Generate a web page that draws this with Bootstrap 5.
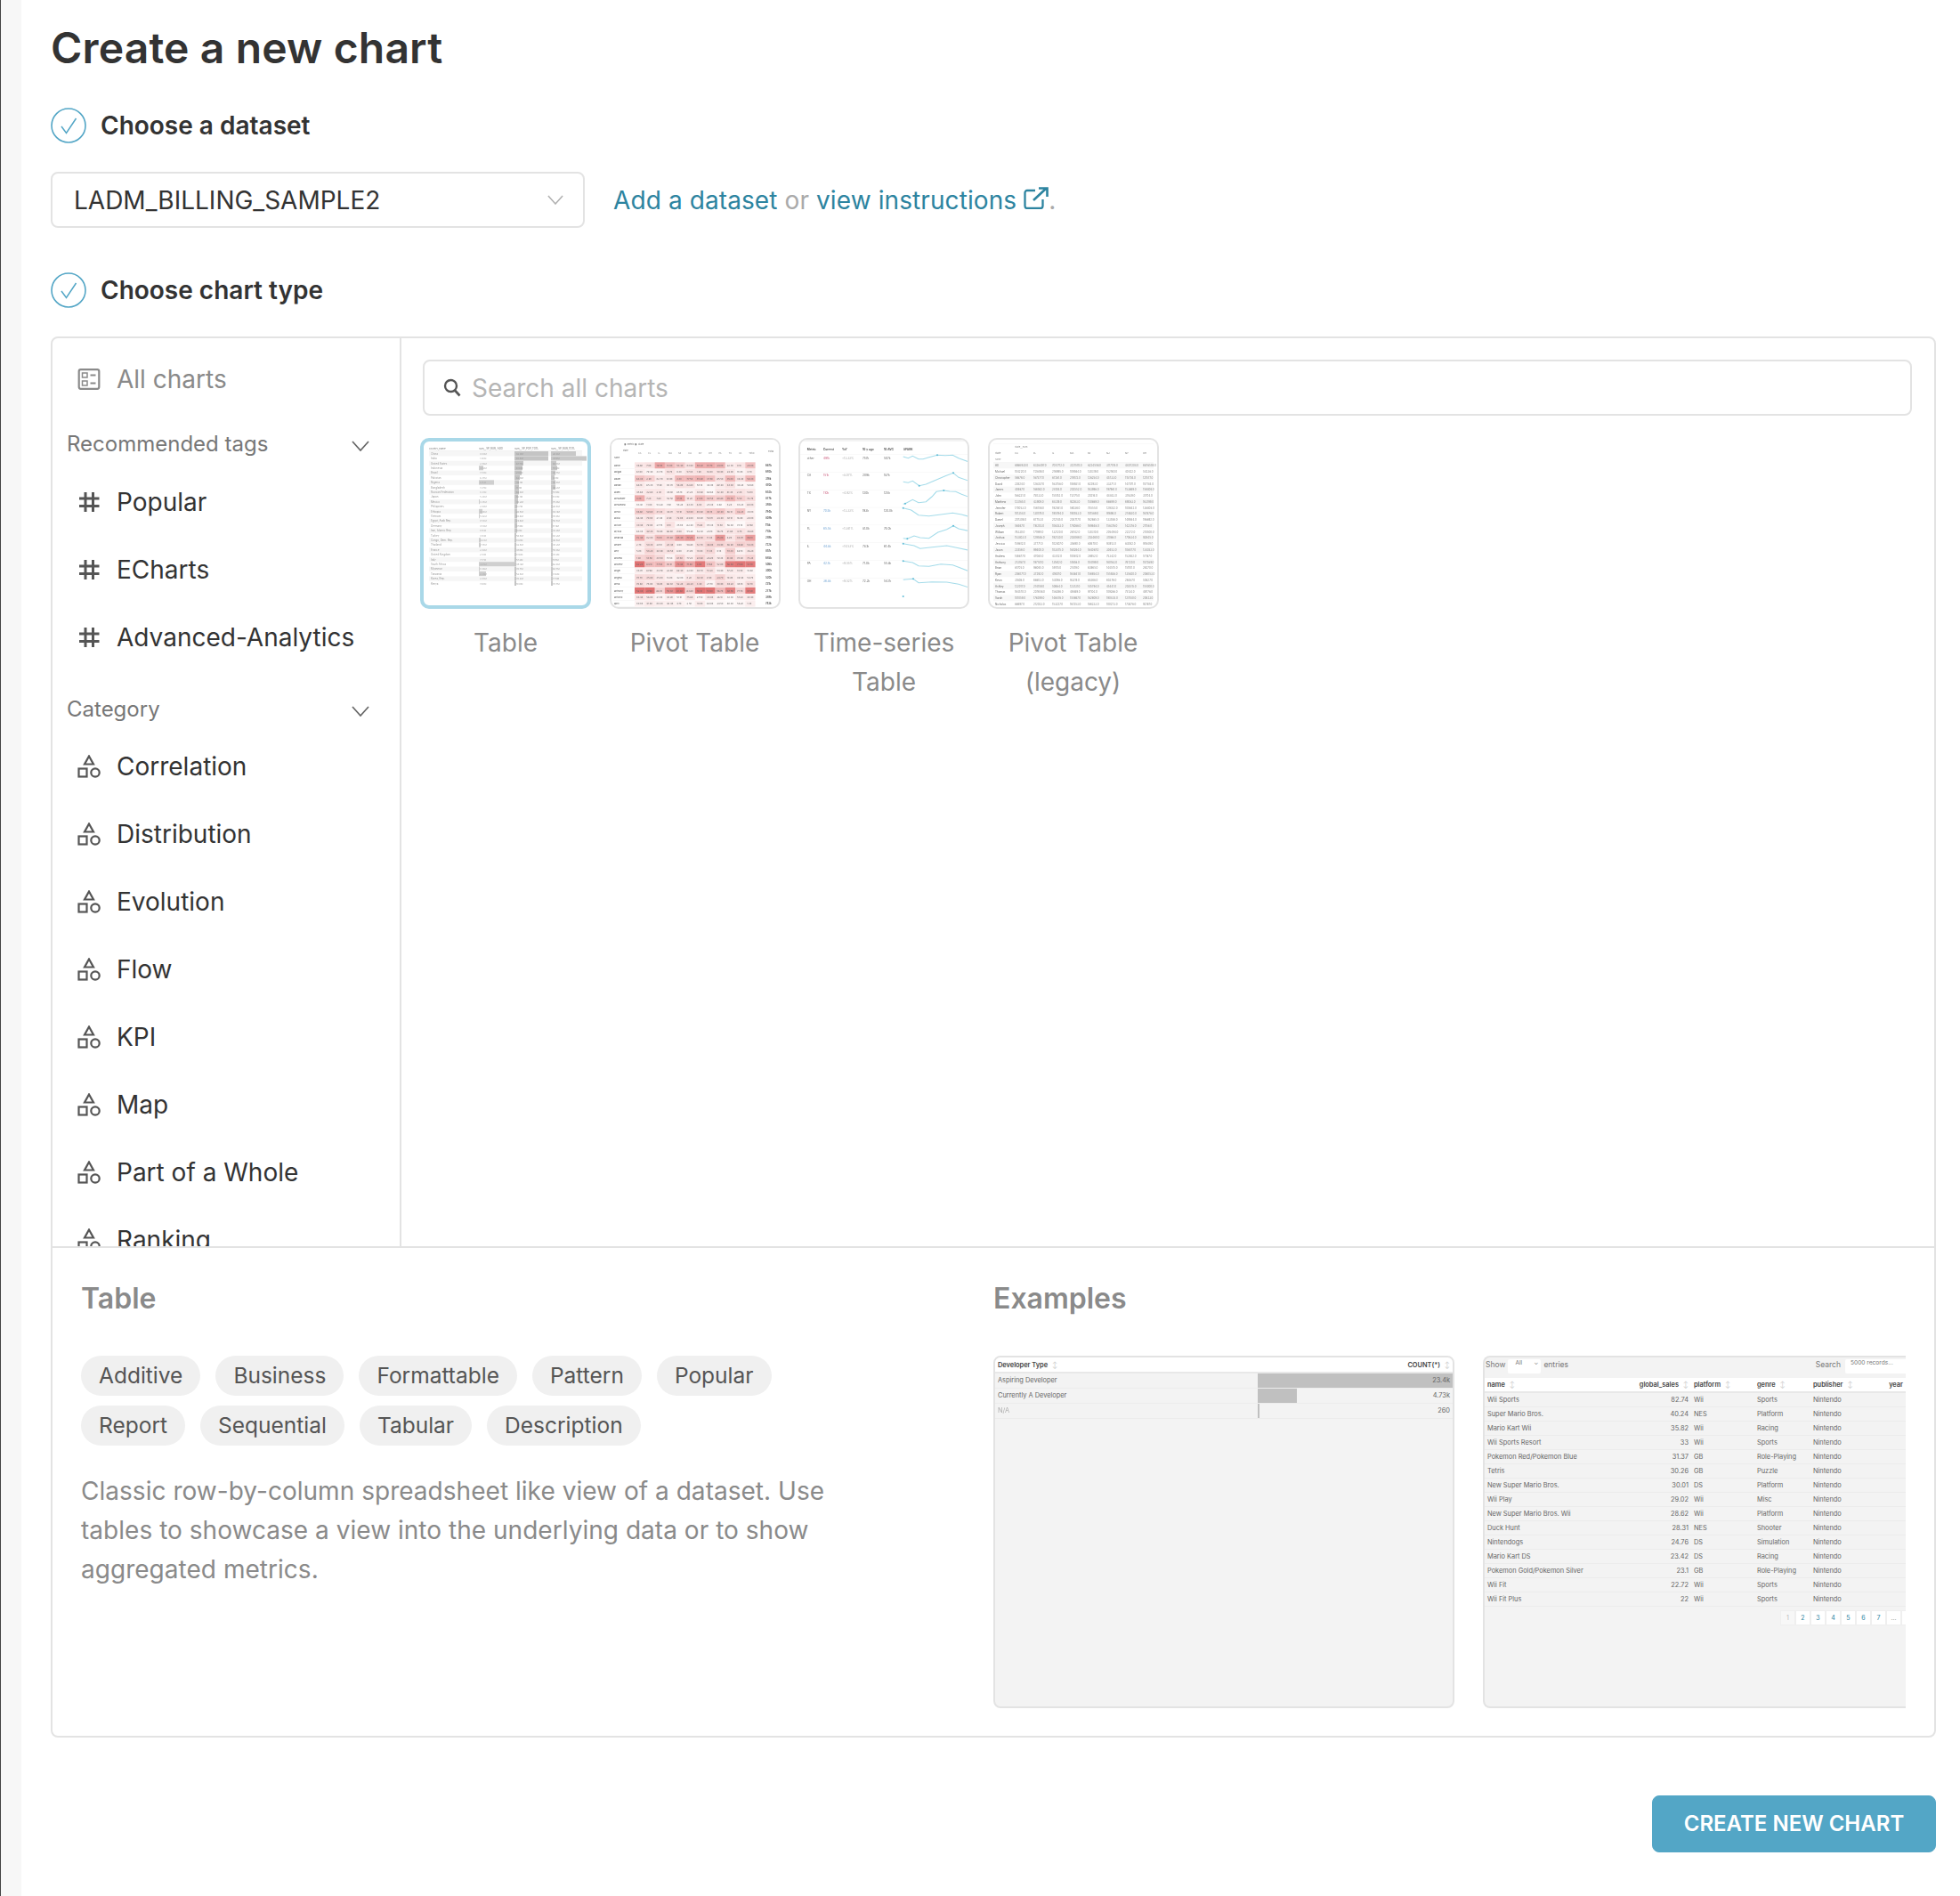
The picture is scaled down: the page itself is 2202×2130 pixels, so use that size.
<!DOCTYPE html>
<html lang="en">
<head>
<meta charset="utf-8">
<title>Create a new chart</title>
<link href="https://cdn.jsdelivr.net/npm/bootstrap@5.3.0/dist/css/bootstrap.min.css" rel="stylesheet">
<style>
html,body{height:100%}
body{font-family:Inter,"Liberation Sans",sans-serif;color:#333;background:#fff;overflow:hidden}
.shell{height:2130px}
.strip{width:24px;flex:none;background:#f7f7f7;border-left:1px solid #444}
.work{flex:1;min-width:0;padding:0 27px 0 33px}
.ttl{font-size:48px;font-weight:600;line-height:60px;margin:24px 0 0;color:#333;letter-spacing:.15px}
.step{height:40px;font-size:28px;font-weight:600;gap:16px;color:#333}
.step1{margin-top:37px}.step2{margin-top:50px}
.setrow{margin-top:32px;height:63px;font-size:28px;color:#aaa;gap:32px;letter-spacing:.1px}
.dsel{width:600px;height:63px;border:2px solid #e3e3e3;border-radius:8px;padding:0 22px 0 24px;color:#333;font-size:28px;letter-spacing:0}
.lnk{color:#2d84a0;text-decoration:none}
.pane{margin-top:32px;height:1574px;border:2px solid #e3e3e3;border-radius:8px;overflow:hidden}
.toparea{height:1022px;border-bottom:2px solid #e3e3e3}
.side{width:392px;flex:none;border-right:2px solid #e3e3e3;overflow:hidden;padding-top:8px}
.itm{height:76px;font-size:28px;color:#333;padding-left:28px}
.itm svg{flex:none}
.itm .tx{margin-left:18px}
.itm.mute{color:#8a8a8a}
.grp{height:40px;margin-top:15px;margin-bottom:7px;padding:0 34px 0 16px;font-size:24px;color:#777}
.grp svg{margin-top:4px}
.grp2{margin-top:23px;margin-bottom:6px}
.mainp{flex:1;min-width:0;padding:24px 25px 0 21px}
.srch{margin-left:3px;height:63px;border:2px solid #e3e3e3;border-radius:8px;padding:0 14px 0 21px;gap:10px}
.srch input{border:0;outline:0;flex:1;font:400 28px Inter,sans-serif;color:#333;background:none}
.srch input::placeholder{color:#b5b5b5;opacity:1}
.thumbs{margin-top:25px;gap:20.5px}
.tcell{width:192px;text-align:center;font-size:28px;line-height:44px;color:#8a8a8a}
.tbox{display:block;width:192px;height:192px;border:2px solid #e3e3e3;border-radius:10px;overflow:hidden;margin-bottom:16px;background:#fff}
.tbox.sel{border:4px solid #a9d8e8}
.tbox svg{display:block;width:100%;height:100%;filter:blur(.4px);font-family:Inter,sans-serif}
.infoL{width:1057px;padding:35px 0 0 32px}
.infoR{flex:1;min-width:0;padding-top:35px}
.hd{font-size:32px;font-weight:600;line-height:44px;color:#8a8a8a;margin:0}
.tags{margin-top:42px;gap:11px 17px;width:860px}
.tagp{height:45px;padding:0 20px;border-radius:23px;background:#f0f0f0;color:#555;font-size:24.5px;line-height:45px}
.dsc{margin:29px 0 0;width:860px;font-size:28px;line-height:44px;color:#8a8a8a;letter-spacing:.03px}
.exs{margin-top:42px;gap:32px}
.ex{height:396px;background:#f3f3f3;border:2px solid #e3e3e3;border-radius:8px;overflow:hidden;font-size:7.4px;color:#666}
.ex1{width:518px}
.ex2{width:475px;border-right:0;border-radius:8px 0 0 8px}
.ex .table{--bs-table-bg:transparent;--bs-table-color:#666;margin:0;table-layout:fixed;font-size:7.4px;--bs-table-border-color:#ececec}
.ex .table th,.ex .table td{padding:0 3px;height:16px;line-height:15px;white-space:nowrap;overflow:hidden;vertical-align:middle}
.ex .table th{background:#fff;color:#444;font-weight:600;border-bottom:2px solid #e8e8e8}
.ex1 .table th{height:17px}.ex1 .table td{height:17px}
.srt{color:#ccc;font-weight:400;margin-left:3px}
.tb{height:23px;padding:2px 0 0 1px;gap:3px;font-size:8.5px;color:#777}
.tsel{width:37px;height:16px;background:#fff;border-radius:2px;font-size:6.6px;padding:0 3px 0 8px}
.tinp{width:68px;height:16px;background:#fff;border-radius:2px 0 0 2px;font-size:6.6px;padding-left:6px;margin-left:2px}
.pg{margin:4px 0 0 332px;height:17px;width:200px;font-size:7px}
.pg span{width:17px;height:17px;background:#fff;color:#2d84a0;border:1px solid #efefef;text-align:center;line-height:15px;flex:none}
.pg span.off{color:#bbb;background:#f7f7f7}
.pg span.dots{color:#999}
.foot{margin-top:65px}
.cta{width:319px;height:64px;background:#53a6c6;border-color:#53a6c6;color:#fff;font-size:24px;font-weight:600;border-radius:8px;padding:0}
.cta:hover{background:#4897b6;border-color:#4897b6;color:#fff}
</style>
</head>
<body>
<svg width="0" height="0" class="d-block position-absolute">
  <symbol id="i-check" viewBox="0 0 40 40"><circle cx="20" cy="20" r="19" fill="none" stroke="#53a6c6" stroke-width="1.6"/><path d="M12 21l5.500 7.500L28.500 12" fill="none" stroke="#53a6c6" stroke-width="1.500"/></symbol>
  <symbol id="i-hash" viewBox="0 0 26 26"><path d="M9 2V24M17.500 2V24M2 9H24.500M2 17.500H24.500" fill="none" stroke="#555" stroke-width="3"/></symbol>
  <symbol id="i-shape" viewBox="0 0 26 26"><path d="M13 1.500L18 10.500H8Z" fill="none" stroke="#555" stroke-width="2.200"/><rect x="1.500" y="15.500" width="9" height="9" fill="none" stroke="#555" stroke-width="2.200"/><circle cx="20" cy="20" r="4.700" fill="none" stroke="#555" stroke-width="2.200"/></symbol>
  <symbol id="i-chev" viewBox="0 0 20 12"><path d="M1 1l9 10 9-10" fill="none" stroke="#666" stroke-width="1.700"/></symbol>
</svg>
<div class="shell d-flex">
  <div class="strip"></div>
  <main class="work">
    <h1 class="ttl">Create a new chart</h1>
    <div class="step step1 d-flex align-items-center"><svg width="40" height="40"><use href="#i-check"/></svg><span>Choose a dataset</span></div>
    <div class="setrow d-flex align-items-center">
      <div class="dsel d-flex align-items-center justify-content-between"><span>LADM_BILLING_SAMPLE2</span><svg width="18" height="11" viewBox="0 0 20 12"><path d="M1 1l9 10 9-10" fill="none" stroke="#b0b0b0" stroke-width="1.700"/></svg></div>
      <div><a class="lnk" href="#">Add a dataset</a> or <a class="lnk" href="#">view instructions <svg width="28" height="25" viewBox="0 0 28 25" class="align-baseline"><path d="M13 4H4a2.500 2.500 0 0 0-2.500 2.500v15A2.500 2.500 0 0 0 4 24h15a2.500 2.500 0 0 0 2.500-2.500V14" fill="none" stroke="#2d84a0" stroke-width="2.300"/><path d="M11 15L25 2M17 1.500h9.500V11" fill="none" stroke="#2d84a0" stroke-width="2.600"/></svg></a>.</div>
    </div>
    <div class="step step2 d-flex align-items-center"><svg width="40" height="40"><use href="#i-check"/></svg><span>Choose chart type</span></div>

    <section class="pane">
      <div class="toparea d-flex">
        <aside class="side">
          <div class="itm mute d-flex align-items-center"><svg width="26" height="24" viewBox="0 0 25 24"><rect x="1.200" y="1.200" width="22.600" height="21.600" rx="2" fill="none" stroke="#8a8a8a" stroke-width="2.200"/><rect x="5" y="5" width="5.500" height="5" fill="none" stroke="#8a8a8a" stroke-width="1.500"/><rect x="5" y="14" width="5.500" height="5" fill="none" stroke="#8a8a8a" stroke-width="1.500"/><path d="M14 7.500h6M14 16.500h6" stroke="#8a8a8a" stroke-width="2"/></svg><span class="tx">All charts</span></div>
          <div class="grp d-flex align-items-center justify-content-between"><span>Recommended tags</span><svg width="20" height="12"><use href="#i-chev"/></svg></div>
          <div class="itm d-flex align-items-center"><svg width="26" height="26"><use href="#i-hash"/></svg><span class="tx">Popular</span></div>
          <div class="itm d-flex align-items-center"><svg width="26" height="26"><use href="#i-hash"/></svg><span class="tx">ECharts</span></div>
          <div class="itm d-flex align-items-center"><svg width="26" height="26"><use href="#i-hash"/></svg><span class="tx">Advanced-Analytics</span></div>
          <div class="grp grp2 d-flex align-items-center justify-content-between"><span>Category</span><svg width="20" height="12"><use href="#i-chev"/></svg></div>
          <div class="itm d-flex align-items-center"><svg width="26" height="26"><use href="#i-shape"/></svg><span class="tx">Correlation</span></div>
          <div class="itm d-flex align-items-center"><svg width="26" height="26"><use href="#i-shape"/></svg><span class="tx">Distribution</span></div>
          <div class="itm d-flex align-items-center"><svg width="26" height="26"><use href="#i-shape"/></svg><span class="tx">Evolution</span></div>
          <div class="itm d-flex align-items-center"><svg width="26" height="26"><use href="#i-shape"/></svg><span class="tx">Flow</span></div>
          <div class="itm d-flex align-items-center"><svg width="26" height="26"><use href="#i-shape"/></svg><span class="tx">KPI</span></div>
          <div class="itm d-flex align-items-center"><svg width="26" height="26"><use href="#i-shape"/></svg><span class="tx">Map</span></div>
          <div class="itm d-flex align-items-center"><svg width="26" height="26"><use href="#i-shape"/></svg><span class="tx">Part of a Whole</span></div>
          <div class="itm d-flex align-items-center"><svg width="26" height="26"><use href="#i-shape"/></svg><span class="tx">Ranking</span></div>
        </aside>
        <div class="mainp">
          <label class="srch d-flex align-items-center"><svg width="20" height="21" viewBox="0 0 20 21"><circle cx="8.500" cy="8.500" r="6.500" fill="none" stroke="#555" stroke-width="2.400"/><path d="M13 13.500l5.500 6" stroke="#555" stroke-width="2.600"/></svg><input type="text" placeholder="Search all charts" aria-label="Search all charts"></label>
          <div class="thumbs d-flex">
            <div class="tcell"><span class="tbox sel"><svg id="t1" viewBox="0 0 184 184"></svg></span>Table</div>
            <div class="tcell"><span class="tbox"><svg id="t2" viewBox="0 0 188 188"></svg></span>Pivot Table</div>
            <div class="tcell"><span class="tbox"><svg id="t3" viewBox="0 0 188 188"></svg></span>Time-series Table</div>
            <div class="tcell"><span class="tbox"><svg id="t4" viewBox="0 0 188 188"></svg></span>Pivot Table (legacy)</div>
          </div>
        </div>
      </div>
      <div class="d-flex">
        <div class="infoL">
          <h2 class="hd">Table</h2>
          <div class="tags d-flex flex-wrap">
            <span class="tagp">Additive</span><span class="tagp">Business</span><span class="tagp">Formattable</span><span class="tagp">Pattern</span><span class="tagp">Popular</span><span class="tagp">Report</span><span class="tagp">Sequential</span><span class="tagp">Tabular</span><span class="tagp">Description</span>
          </div>
          <p class="dsc">Classic row-by-column spreadsheet like view of a dataset. Use tables to showcase a view into the underlying data or to show aggregated metrics.</p>
        </div>
        <div class="infoR">
          <h2 class="hd">Examples</h2>
          <div class="exs d-flex">
            <div class="ex ex1">
              <table class="table">
                <colgroup><col style="width:295px"><col></colgroup>
                <thead><tr><th>Developer Type <span class="srt">↕</span></th><th class="text-end">COUNT(*) <span class="srt">↕</span></th></tr></thead>
                <tbody>
                  <tr><td>Aspiring Developer</td><td class="text-end" style="background:linear-gradient(90deg,#c0c0c0 100%,transparent 100%)">23.4k</td></tr>
                  <tr><td>Currently A Developer</td><td class="text-end" style="background:linear-gradient(90deg,#c0c0c0 20.200%,transparent 20.200%)">4.73k</td></tr>
                  <tr><td class="opacity-50">N/A</td><td class="text-end" style="background:linear-gradient(90deg,#c0c0c0 1.100%,transparent 1.100%)">260</td></tr>
                </tbody>
              </table>
            </div>
            <div class="ex ex2">
              <div class="tb d-flex align-items-start"><span>Show</span><span class="tsel d-flex justify-content-between"><span>All</span><span>⌄</span></span><span>entries</span><span class="ms-auto">Search</span><span class="tinp">5000 records...</span></div>
              <table class="table">
                <colgroup><col style="width:150px"><col style="width:82px"><col style="width:71px"><col style="width:63px"><col style="width:60px"><col></colgroup>
                <thead><tr><th>name <span class="srt">↕</span></th><th class="text-end">global_sales <span class="srt">↕</span></th><th>platform <span class="srt">↕</span></th><th>genre <span class="srt">↕</span></th><th>publisher <span class="srt">↕</span></th><th class="text-end">year</th></tr></thead>
                <tbody>
                  <tr><td>Wii Sports</td><td class="text-end">82.74</td><td>Wii</td><td>Sports</td><td>Nintendo</td><td></td></tr>
                  <tr><td>Super Mario Bros.</td><td class="text-end">40.24</td><td>NES</td><td>Platform</td><td>Nintendo</td><td></td></tr>
                  <tr><td>Mario Kart Wii</td><td class="text-end">35.82</td><td>Wii</td><td>Racing</td><td>Nintendo</td><td></td></tr>
                  <tr><td>Wii Sports Resort</td><td class="text-end">33</td><td>Wii</td><td>Sports</td><td>Nintendo</td><td></td></tr>
                  <tr><td>Pokemon Red/Pokemon Blue</td><td class="text-end">31.37</td><td>GB</td><td>Role-Playing</td><td>Nintendo</td><td></td></tr>
                  <tr><td>Tetris</td><td class="text-end">30.26</td><td>GB</td><td>Puzzle</td><td>Nintendo</td><td></td></tr>
                  <tr><td>New Super Mario Bros.</td><td class="text-end">30.01</td><td>DS</td><td>Platform</td><td>Nintendo</td><td></td></tr>
                  <tr><td>Wii Play</td><td class="text-end">29.02</td><td>Wii</td><td>Misc</td><td>Nintendo</td><td></td></tr>
                  <tr><td>New Super Mario Bros. Wii</td><td class="text-end">28.62</td><td>Wii</td><td>Platform</td><td>Nintendo</td><td></td></tr>
                  <tr><td>Duck Hunt</td><td class="text-end">28.31</td><td>NES</td><td>Shooter</td><td>Nintendo</td><td></td></tr>
                  <tr><td>Nintendogs</td><td class="text-end">24.76</td><td>DS</td><td>Simulation</td><td>Nintendo</td><td></td></tr>
                  <tr><td>Mario Kart DS</td><td class="text-end">23.42</td><td>DS</td><td>Racing</td><td>Nintendo</td><td></td></tr>
                  <tr><td>Pokemon Gold/Pokemon Silver</td><td class="text-end">23.1</td><td>GB</td><td>Role-Playing</td><td>Nintendo</td><td></td></tr>
                  <tr><td>Wii Fit</td><td class="text-end">22.72</td><td>Wii</td><td>Sports</td><td>Nintendo</td><td></td></tr>
                  <tr><td>Wii Fit Plus</td><td class="text-end">22</td><td>Wii</td><td>Sports</td><td>Nintendo</td><td></td></tr>
                </tbody>
              </table>
              <div class="pg d-flex"><span class="off">1</span><span>2</span><span>3</span><span>4</span><span>5</span><span>6</span><span>7</span><span class="dots">...</span><span></span></div>
            </div>
          </div>
        </div>
      </div>
    </section>
    <div class="foot d-flex justify-content-end"><button type="button" class="btn cta">CREATE NEW CHART</button></div>
  </main>
</div>
<script src="https://cdn.jsdelivr.net/npm/bootstrap@5.3.0/dist/js/bootstrap.bundle.min.js"></script>
<script>
(function(){
  var seed=7;function R(){seed=(seed*16807)%2147483647;return seed/2147483647;}
  function T(x,y,s,sz,c,w,a){return '<text x="'+x+'" y="'+y+'" font-size="'+sz+'" fill="'+c+'"'+(w?' font-weight="'+w+'"':'')+(a?' text-anchor="'+a+'"':'')+'>'+s+'</text>';}
  function Rc(x,y,w,h,c){return '<rect x="'+x+'" y="'+y+'" width="'+w+'" height="'+h+'" fill="'+c+'"/>';}
  var names=['China','India','United States','Indonesia','Brazil','Pakistan','Nigeria','Bangladesh','Russian Federation','Japan','Mexico','Philippines','Ethiopia','Vietnam','Egypt, Arab Rep.','Germany','Iran, Islamic Rep.','Turkey','Congo, Dem. Rep.','Thailand','France','United Kingdom','Italy','South Africa','Myanmar','Tanzania','Korea, Rep.','Kenya'];
  var b1=[0,0,0,5,0,0,17,0,0,0,1,0,4,1,0,0,0,0,2,2,0,0,0,40,1,8,0,0];
  var b2=[38,38,10,9,8,6,5,5,5,4,4,3,3,3,3,3,3,2,2,2,2,2,2,2,2,2,2,2];
  var b3=[28,40,6,7,5,4,5,5,2,2,2,2,2,2,2,2,2,2,2,2,2,2,2,2,2,2,2,2];
  var s='';
  s+=T(6,9,'country_name',2.8,'#777')+T(62,9,'sum__SP_RUR_.ADO',2.8,'#777')+T(102,9,'sum__SP_POP_TOTL',2.8,'#777')+T(143,9,'sum__SP_RUR_TOTL',2.8,'#777')+Rc(6,10.500,172,.4,'#ddd');
  names.forEach(function(n,i){var y=11+i*5.4;
    if(i%2==0)s+=Rc(6,y,172,5.4,'#f6f6f6');
    s+=Rc(62,y,b1[i],5.2,'#cfcfcf')+Rc(102,y,b2[i],5.2,'#c4c4c4')+Rc(143,y,b3[i],5.2,'#c8c8c8');
    s+=T(8,y+3.800,n,2.9,'#999')+T(63,y+3.800,(R()*9).toFixed(2)+'M',2.6,'#aaa')+T(104,y+3.800,(R()*90).toFixed(1)+'M',2.6,'#999')+T(145,y+3.800,(R()*90).toFixed(1)+'M',2.6,'#999');
  });
  document.getElementById('t1').innerHTML=s;
  s=Rc(0,0,188,25,'#fff')+T(14,6,'◉ metric  ◉ State',2.6,'#666')+T(13,13,'state',2.4,'#666')+T(3,20.500,'name',2.4,'#666')+T(176,14,'Total',2.6,'#666');
  var heads=['CA','FL','IL','MA','MI','NJ','NY','OH','PA','TX','VA','Total'];
  heads.forEach(function(h,i){s+=T(30+i*11.3,16,h,2.6,'#888');});
  var rn=['aaron','abigail','adam','adrian','aiden','alexander','alexandra','alexis','alicia','allison','alyssa','amanda','amber','amy','andrea','andrew','angel','angela','anna','anthony','antonio','april','ariel'];
  var rb=[.35,.12,.3,.12,.12,.35,.1,.22,.12,.12,.12,.42,.22,.22,.2,.6,.12,.2,.16,.72,.12,.08,.3];
  rn.forEach(function(n,i){var y=25+i*7.4;
    s+=Rc(2,y+7,24,.4,'#eee')+T(3,y+4.900,n,2.7,'#555');
    for(var j=0;j<12;j++){var a=Math.min(.9,rb[i]*(.35+R()*1.300));s+=Rc(26+j*11.3,y+.3,11.3,7,'rgba(222,100,100,'+a.toFixed(2)+')');s+=T(28+j*11.3,y+4.900,(R()*90).toFixed(1)+'k',2.7,'#666');}
    s+=T(173,y+4.900,Math.round(R()*900)+'k',2.8,'#444','600');
  });
  document.getElementById('t2').innerHTML=s;
  s=Rc(0,0,188,2,'#f3f3f3');
  [['Metric',7.700],['Current',26],['YoY',47],['10 y ago',70],['10 AVG',94],['SPARK',116]].forEach(function(h){s+=T(h[1],12,h[0],3.2,'#444','600');});
  var rows=[['other','491k','+13.33%','757k','507k','#c9587a'],['CA','151k','+8.07%','209k','187k','#c9587a'],['TX','110k','+4.92%','120k','125k','#c9587a'],['NY','70.5k','+13.33%','193k','120.0k','#6a9fd0'],['FL','65.5k','+13.61%','81.0k','74.0k','#6a9fd0'],['IL','44.8k','+14.53%','78.1k','61.4k','#6a9fd0'],['PA','42.1k','+9.55%','71.0k','55.8k','#6a9fd0'],['OH','36.8k','+9.52%','72.2k','54.7k','#6a9fd0']];
  rows.forEach(function(r,i){var y=21.500+i*19.8;
    s+=Rc(0,y-5,188,.4,'#f0f0f0')+T(7.700,y,r[0],3.2,'#666')+T(26,y,r[1],3.2,r[5])+T(47,y,r[2],3.2,'#aaa')+T(70,y,r[3],3.2,'#666')+T(94,y,r[4],3.2,'#666');
  });
  var sp=[[[403,95],[420,100],[435,93],[455,103],[470,103],[490,97],[518,90],[545,91],[570,90],[590,100],[622,112]],[[403,180],[420,183],[435,177],[457,193],[480,188],[510,175],[545,160],[572,150],[590,165],[622,176]],[[403,255],[410,253],[435,240],[455,250],[480,247],[500,230],[515,213],[540,209],[560,212],[580,213],[600,222],[622,230]],[[403,268],[430,275],[455,292],[490,295],[530,290],[570,285],[600,290],[622,296]],[[403,370],[417,372],[440,362],[460,368],[490,370],[520,350],[550,340],[572,328],[590,338],[622,345]],[[403,388],[440,395],[460,405],[500,400],[550,395],[590,403],[622,410]],[[403,447],[435,452],[455,463],[490,465],[530,457],[570,460],[590,468],[622,480]],[[403,510],[437,507],[455,520],[500,517],[550,518],[590,525],[622,535]]];
  var dots=[[518,90],[457,193],[410,253],[403,268],[417,372],[403,388],[403,447],[437,507],[403,566],[572,150],[540,209],[572,328]];
  function P(p){return ((p[0]-56)/3).toFixed(1)+','+((p[1]-38)/3).toFixed(1);}
  sp.forEach(function(l){s+='<polyline fill="none" stroke="#a5dcea" stroke-width="1.100" points="'+l.map(P).join(' ')+'"/>';});
  dots.forEach(function(d){var q=P(d).split(',');s+='<circle cx="'+q[0]+'" cy="'+q[1]+'" r="1" fill="#5fbcd6"/>';});
  document.getElementById('t3').innerHTML=s;
  var nm=['All','Michael','Christopher','David','James','John','Matthew','Jennifer','Robert','Daniel','Joseph','William','Joshua','Jessica','Jason','Andrew','Anthony','Brian','Ryan','Kevin','Ashley','Thomas','Sarah','Nicholas'];
  var cols=[28,49,70,90,110,131,152,172];
  s=T(28,9,'state__num',2.7,'#888')+Rc(4,4,180,.3,'#eee')+T(6,16,'state',2.7,'#777');
  ['CA','FL','IL','MA','MI','NJ','NY','OH'].forEach(function(h,i){s+=T(cols[i],16,h,2.7,'#777');});
  s+=T(6,23,'name',2.5,'#999')+Rc(4,25,180,.4,'#e4e4e4');
  nm.forEach(function(n,i){var y=25.500+i*6.77;
    if(i%2==0)s+=Rc(4,y,180,6.77,'#f7f7f7');
    s+=T(6,y+4.700,n,3,'#666');
    cols.forEach(function(c){s+=T(c,y+4.700,Math.round((i?20000+R()*200000:2000000+R()*7000000))+'.0',2.9,'#888');});
  });
  document.getElementById('t4').innerHTML=s;
})();
</script>
</body>
</html>
